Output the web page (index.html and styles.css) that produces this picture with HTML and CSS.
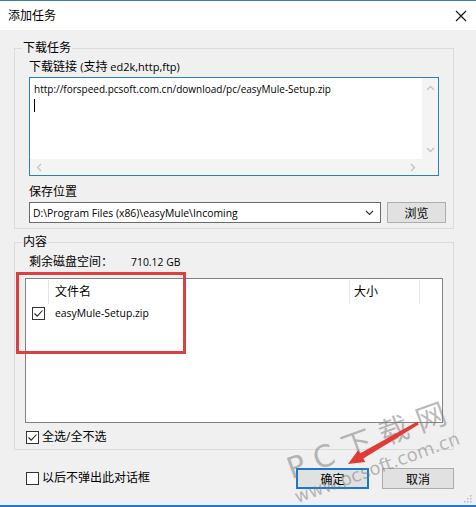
FILE: index.html
```html
<!DOCTYPE html>
<html lang="zh-CN">
<head>
<meta charset="utf-8">
<title>添加任务</title>
<link rel="stylesheet" href="styles.css">
</head>
<body>
<div class="window">
  <div class="titlebar">
    <span class="title">添加任务</span>
    <svg class="close" width="12" height="12" viewBox="0 0 12 12"><path d="M1 1 L11 11 M11 1 L1 11" stroke="#111" stroke-width="1.1" fill="none"/></svg>
  </div>
  <div class="body">
    <fieldset class="group g1">
      <legend>下载任务</legend>
      <div class="label">下载链接 <span class="en lbl">(</span>支持<span class="en lbl"> ed2k,http,ftp)</span></div>
      <div class="textbox">
        <div class="tb-content">
          <div class="tb-line">http://forspeed.pcsoft.com.cn/download/pc/easyMule-Setup.zip</div>
          <div class="tb-line"><span class="caret"></span></div>
        </div>
        <div class="vscroll">
          <svg width="9" height="6" viewBox="0 0 9 6"><path d="M1 5 L4.5 1.5 L8 5" stroke="#c4c4c4" stroke-width="1.3" fill="none"/></svg>
          <svg width="9" height="6" viewBox="0 0 9 6"><path d="M1 1 L4.5 4.5 L8 1" stroke="#c4c4c4" stroke-width="1.3" fill="none"/></svg>
        </div>
        <div class="hscroll">
          <svg width="6" height="9" viewBox="0 0 6 9"><path d="M5 1 L1.5 4.5 L5 8" stroke="#c4c4c4" stroke-width="1.3" fill="none"/></svg>
          <svg width="6" height="9" viewBox="0 0 6 9"><path d="M1 1 L4.5 4.5 L1 8" stroke="#c4c4c4" stroke-width="1.3" fill="none"/></svg>
        </div>
        <div class="corner"></div>
      </div>
      <div class="label label2">保存位置</div>
      <div class="pathrow">
        <div class="combo">
          <span>D:\Program Files (x86)\easyMule\Incoming</span>
          <svg width="9" height="6" viewBox="0 0 9 6"><path d="M1 1 L4.5 4.5 L8 1" stroke="#333" stroke-width="1.1" fill="none"/></svg>
        </div>
        <button class="btn browse">浏览</button>
      </div>
    </fieldset>

    <fieldset class="group g2">
      <legend>内容</legend>
      <div class="disk"><span class="disk-label">剩余磁盘空间：</span><span class="en">710.12 GB</span></div>
      <div class="list">
        <div class="list-head">
          <div class="cell c0"></div>
          <div class="cell c1">文件名</div>
          <div class="cell c2">大小</div>
          <div class="cell c3"></div>
        </div>
        <div class="list-row">
          <div class="rc0"><span class="box checked"><svg width="11" height="11" viewBox="0 0 11 11"><path d="M1.5 5.5 L4.2 8.2 L9.5 2.5" stroke="#222" stroke-width="1.1" fill="none"/></svg></span></div>
          <div class="rc1 en">easyMule-Setup.zip</div>
        </div>
      </div>
      <div class="check all"><span class="box checked"><svg width="11" height="11" viewBox="0 0 11 11"><path d="M1.5 5.5 L4.2 8.2 L9.5 2.5" stroke="#222" stroke-width="1.1" fill="none"/></svg></span><span>全选/全不选</span></div>
    </fieldset>

    <div class="footer">
      <div class="check"><span class="box"></span><span>以后不弹出此对话框</span></div>
      <div class="buttons">
        <button class="btn primary">确定</button>
        <button class="btn">取消</button>
      </div>
    </div>
  </div>
  <div class="bottom-line"></div>

  <div class="annot-rect"></div>
  <div class="watermark wm1">P C 下 载 网</div>
  <div class="watermark wm2">www.pcsoft.com.cn</div>
  <svg class="arrow" width="476" height="507" viewBox="0 0 476 507">
    <polygon points="417.3,421.6 418.7,424.4 363.3,458.5 365.3,461.9 348,464 358.3,449.9 360.3,453.3" fill="#e23a36"/>
  </svg>
  <svg class="grip" width="8" height="8" viewBox="0 0 8 8">
    <rect x="6" y="0" width="1.5" height="1.5" fill="#bbb"/>
    <rect x="3" y="3" width="1.5" height="1.5" fill="#bbb"/>
    <rect x="6" y="3" width="1.5" height="1.5" fill="#bbb"/>
    <rect x="0" y="6" width="1.5" height="1.5" fill="#bbb"/>
    <rect x="3" y="6" width="1.5" height="1.5" fill="#bbb"/>
    <rect x="6" y="6" width="1.5" height="1.5" fill="#bbb"/>
  </svg>
</div>
</body>
</html>
```

FILE: styles.css
```css
* { box-sizing: border-box; }
html, body { margin: 0; padding: 0; }
body {
  font-family: "Open Sans", "Noto Sans CJK SC", sans-serif;
  font-size: 12px;
  line-height: 16px;
  color: #000;
  background: #f0f0f0;
}
.en { font-size: 10.4px; }
.en.lbl { font-size: 11px; }
.window {
  position: relative;
  width: 476px;
  height: 507px;
  display: flex;
  flex-direction: column;
  background: #f0f0f0;
  overflow: hidden;
}
.titlebar {
  height: 30px;
  flex: none;
  background: #fff;
  border-top: 1px solid #3a7aa8;
  display: flex;
  align-items: center;
  justify-content: space-between;
  padding: 0 9px 0 8px;
}
.title { font-size: 12px; }
.close { margin-top: 1px; }
.body { flex: 1; display: flex; flex-direction: column; }

.group {
  margin: 0 0 0 14px;
  width: 440px;
  border: 1px solid #dcdcdc;
  padding: 3px 14px 5px 14px;
  min-width: 0;
}
.group legend {
  padding: 0 1px;
  margin-left: -7px;
  font-size: 12px;
  line-height: 16px;
}
.g1 { margin-top: 10px; }
.g2 { margin-top: 5px; padding-top: 4px; padding-bottom: 4px; }

.label { height: 16px; white-space: nowrap; }
.label2 { margin-top: 8px; }

.textbox {
  margin-top: 2px;
  width: 410px;
  height: 99px;
  border: 1px solid #2f7eb0;
  background: #fff;
  display: grid;
  grid-template-columns: 1fr 16px;
  grid-template-rows: 1fr 16px;
  font-size: 10px;
}
.tb-content { padding: 3px 4px; overflow: hidden; }
.tb-line { height: 16px; white-space: nowrap; }
.caret { display: inline-block; width: 1px; height: 13px; background: #000; vertical-align: -3px; }
.vscroll {
  background: #f4f4f4;
  display: flex;
  flex-direction: column;
  justify-content: space-between;
  align-items: center;
  padding: 7px 0 6px;
}
.hscroll {
  background: #f4f4f4;
  display: flex;
  justify-content: space-between;
  align-items: center;
  padding: 0 6px;
}
.corner { background: #f4f4f4; }

.pathrow {
  margin-top: 2px;
  display: flex;
  gap: 6px;
  margin-right: -8px;
}
.combo {
  width: 352px;
  height: 21px;
  border: 1px solid #6a6a6a;
  background: #fff;
  display: flex;
  align-items: center;
  justify-content: space-between;
  padding: 0 6px 0 3px;
  white-space: nowrap;
  font-size: 10.4px;
}
.btn {
  font-family: "Noto Sans CJK SC", sans-serif;
  font-size: 12px;
  line-height: 16px;
  color: #000;
  background: #e1e1e1;
  border: 1px solid #adadad;
  padding: 0;
  height: 21px;
}
.browse { width: 59px; }

.disk { height: 16px; display: flex; align-items: center; white-space: nowrap; }
.disk-label { width: 102px; }

.list {
  margin-top: 8px;
  margin-left: -4px;
  width: 418px;
  height: 145px;
  border: 1px solid #828282;
  background: #fff;
  padding-top: 1px;
}
.list-head { display: flex; height: 24px; }
.cell { height: 24px; display: flex; align-items: center; border-right: 1px solid #e5e5e5; }
.c0 { width: 23px; }
.c1 { width: 301px; padding-left: 6px; }
.c2 { width: 70px; padding-left: 4px; }
.c3 { flex: 1; border-right: none; }
.list-row { display: flex; height: 18px; align-items: center; }
.rc0 { width: 23px; padding-left: 6px; display: flex; }
.rc1 { padding-left: 6px; }

.box {
  width: 13px;
  height: 13px;
  border: 1px solid #333;
  background: #fff;
  display: inline-flex;
  align-items: center;
  justify-content: center;
  flex: none;
}
.check { display: flex; align-items: center; height: 16px; gap: 3px; white-space: nowrap; }
.check.all { margin-top: 6px; margin-left: -3px; }

.footer {
  margin-top: 18px;
  padding: 0 22px 0 26px;
  display: flex;
  justify-content: space-between;
  align-items: flex-start;
}
.footer .check { margin-top: 2px; }
.buttons { display: flex; gap: 13px; }
.buttons .btn { width: 72px; }
.btn.primary { width: 73px; border: 2px solid #1a78d0; }

.bottom-line { height: 2px; background: #1f7dd0; flex: none; }

.annot-rect {
  position: absolute;
  left: 16px;
  top: 272px;
  width: 170px;
  height: 82px;
  border: 3px solid #d9403f;
}
.watermark {
  position: absolute;
  color: rgba(120, 120, 120, 0.5);
  white-space: nowrap;
  transform-origin: 0 100%;
  transform: rotate(-20deg);
  pointer-events: none;
  font-family: "DejaVu Sans", "Noto Sans CJK SC", sans-serif;
}
.wm1 { left: 294px; top: 452px; font-size: 30px; line-height: 34px; letter-spacing: 0; }
.wm2 { left: 299px; top: 486px; font-size: 18px; line-height: 22px; }
.arrow { position: absolute; left: 0; top: 0; pointer-events: none; }
.grip { position: absolute; right: 4px; bottom: 4px; }
```
